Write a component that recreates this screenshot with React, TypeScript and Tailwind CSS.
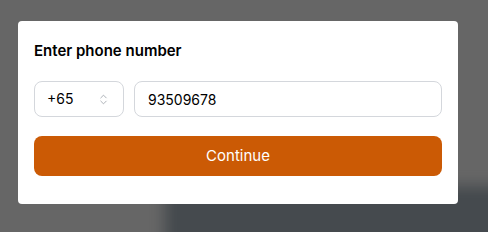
import { ChevronsUpDown } from 'lucide-react';

export default function App() {
  return (
    <div
      className="relative h-[232px] w-[488px] overflow-hidden bg-[#666666]"
      style={{ fontFamily: 'Inter, "Noto Sans", sans-serif' }}
    >
      {/* blurred page behind the overlay */}
      <div className="absolute left-[165px] top-[186px] h-[80px] w-[360px] bg-[#454a4e] blur-[7px]" />

      <div className="relative ml-[18px] mt-[21px] w-[440px] rounded-[4px] bg-white px-4 pb-7 pt-[18px]">
        <h2 className="text-[15px] leading-6 font-semibold text-black">Enter phone number</h2>

        <div className="mt-[18px] flex gap-[10px]">
          <button className="flex h-9 w-[90px] items-center justify-between rounded-lg border border-[#d4d7dc] pl-[12px] pr-[13px] text-sm text-black">
            <span>+65</span>
            <ChevronsUpDown className="h-[13px] w-[13px] text-[#9aa0a8]" strokeWidth={1.5} />
          </button>
          <input
            className="h-9 flex-1 rounded-lg border border-[#d4d7dc] px-[13px] text-sm text-black outline-none"
            defaultValue="93509678"
          />
        </div>

        <button className="mt-[19px] flex h-10 w-full items-center justify-center rounded-lg bg-[#cb5a05] text-[15px] text-white">
          Continue
        </button>
      </div>
    </div>
  );
}
